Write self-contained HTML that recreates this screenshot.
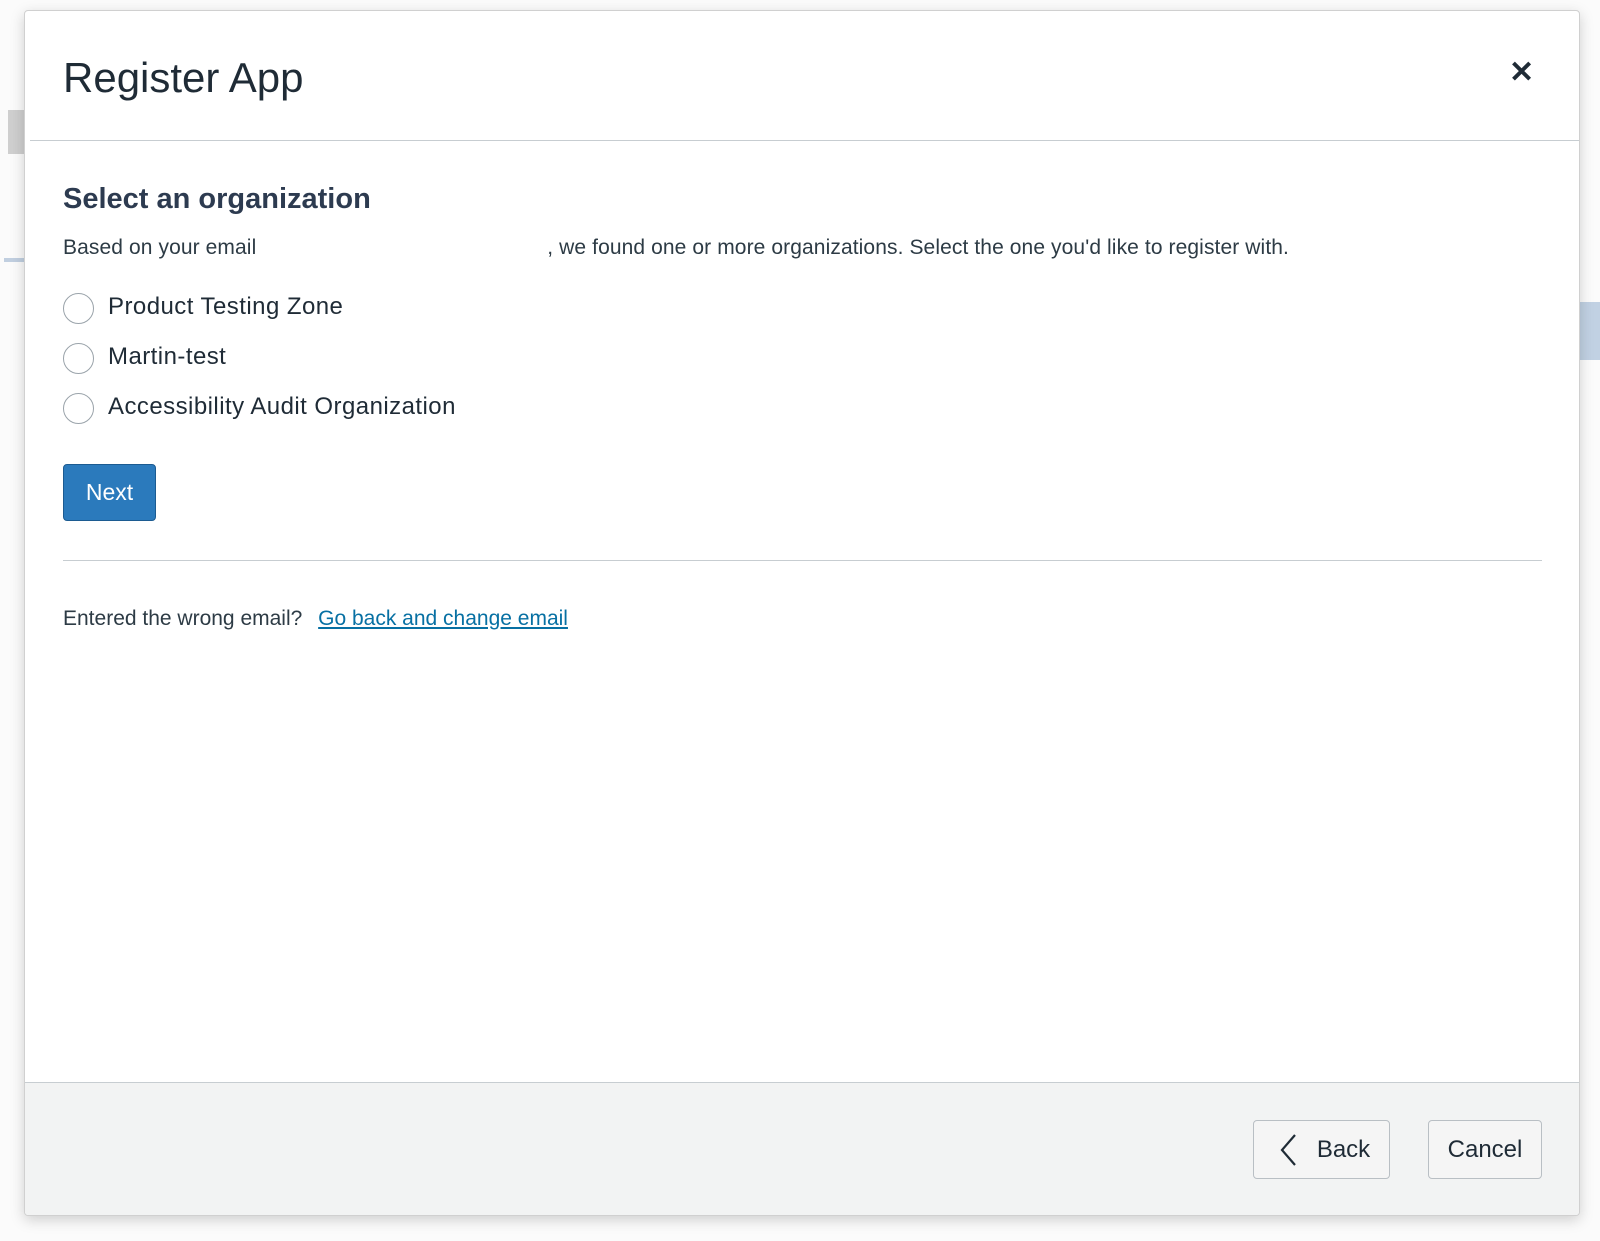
<!DOCTYPE html>
<html><head><meta charset="utf-8"><style>
*{box-sizing:border-box;margin:0;padding:0}
body{width:1600px;height:1241px;background:#f2f2f2;font-family:"Liberation Sans",sans-serif;color:#2d3b45;position:relative;overflow:hidden}
.bg{position:absolute;left:0;top:0;width:1600px;height:1241px;background:#fbfbfb}
.modal{position:absolute;left:24px;top:10px;width:1556px;height:1206px;background:#fff;border:1px solid #d0d0d0;border-radius:4px;box-shadow:0 4px 14px rgba(0,0,0,.18);overflow:hidden}
.t{position:absolute;font-size:42px;left:38px;top:43px;color:#1f2b36}
.x{position:absolute;left:1484px;top:44px;font-size:30px;font-weight:bold;color:#1f2b36}
.hl{position:absolute;left:5px;right:0;top:129px;height:1px;background:#c7cdd1}
h2{position:absolute;left:38px;top:172px;font-size:29px;font-weight:bold;color:#2d3b50}
.p{position:absolute;left:38px;top:225px;font-size:21px;color:#2d3b45;letter-spacing:0.1px}
.r{position:absolute;left:38px;width:31px;height:31px;border:1px solid #9aa3aa;border-radius:50%}
.o{position:absolute;left:83px;font-size:24px;color:#1f2b36;letter-spacing:0.45px}
.btn{position:absolute;left:38px;top:453px;width:93px;height:57px;background:#2b7abc;border:1px solid #1c5b91;border-radius:4px;color:#fff;font-size:23px;text-align:center;line-height:55px}
.sl{position:absolute;left:38px;width:1479px;top:549px;height:1px;background:#c7cdd1}
.e{position:absolute;left:38px;top:596px;font-size:21px}
.e a{color:#0770a3;text-decoration:underline;margin-left:10px}
.f{position:absolute;left:0;right:0;top:1071px;bottom:0;background:#f2f3f3;border-top:1px solid #c7cdd1}
.b{position:absolute;top:37px;height:59px;border:1px solid #b9bfc4;border-radius:4px;background:#f5f5f5;font-size:24px;line-height:57px;color:#1f2b36;text-align:center}
</style></head><body>
<div class="bg"></div>
<div style="position:absolute;left:1580px;top:302px;width:20px;height:58px;background:#c1d1e3"></div>
<div style="position:absolute;left:8px;top:110px;width:16px;height:44px;background:#cfcfcf"></div>
<div style="position:absolute;left:4px;top:258px;width:20px;height:4px;background:#c1cfe0"></div>
<div class="modal">
<div class="t">Register App</div>
<div class="x">✕</div>
<div class="hl"></div>
<h2>Select an organization</h2>
<div class="p">Based on your email <span style="display:inline-block;width:285px"></span>, we found one or more organizations. Select the one you'd like to register with.</div>
<div class="r" style="top:282px"></div><div class="o" style="top:282px">Product Testing Zone</div>
<div class="r" style="top:332px"></div><div class="o" style="top:332px">Martin-test</div>
<div class="r" style="top:382px"></div><div class="o" style="top:382px">Accessibility Audit Organization</div>
<div class="btn">Next</div>
<div class="sl"></div>
<div class="e">Entered the wrong email? <a>Go back and change email</a></div>
<div class="f">
<div class="b" style="left:1228px;width:137px"><svg width="22" height="34" viewBox="0 0 22 34" style="position:absolute;left:24px;top:12px"><path d="M17 2 L4 17 L17 32" fill="none" stroke="#1f2b36" stroke-width="2.2"/></svg><span style="margin-left:44px">Back</span></div>
<div class="b" style="left:1403px;width:114px">Cancel</div>
</div>
</div>
</body></html>
